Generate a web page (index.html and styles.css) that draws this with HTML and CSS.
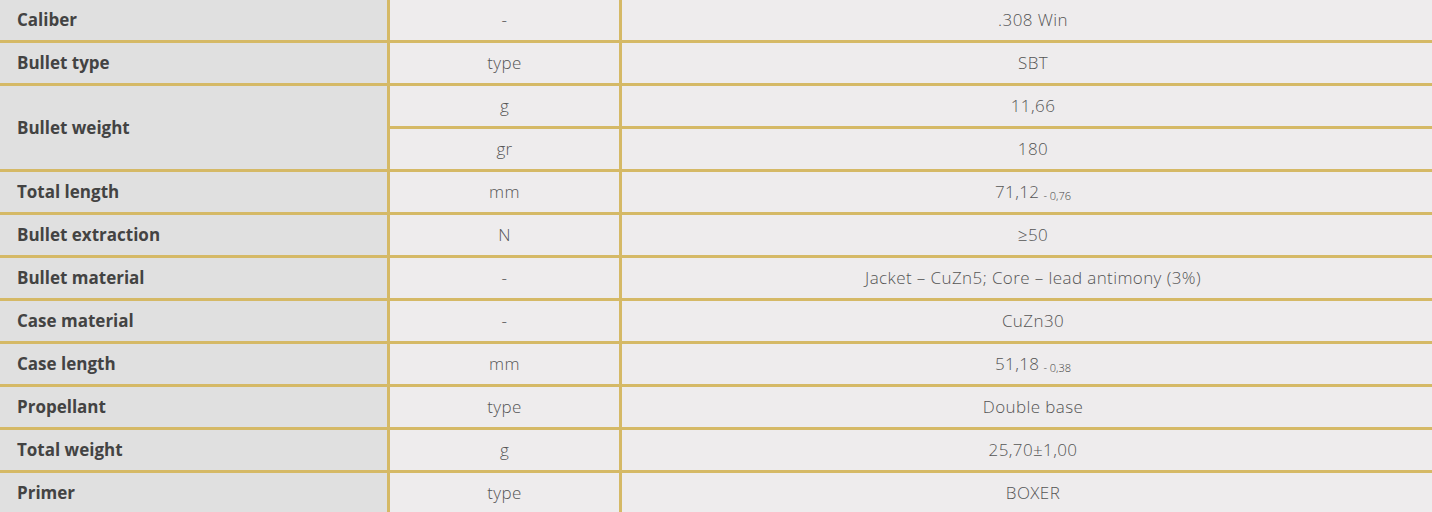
FILE: index.html
```html
<!DOCTYPE html>
<html>
<head>
<meta charset="utf-8">
<link rel="stylesheet" href="styles.css">
</head>
<body>
<div class="spec">
  <div class="lbl">Caliber</div><div class="unit">-</div><div class="val">.308 Win</div>
  <div class="lbl">Bullet type</div><div class="unit">type</div><div class="val">SBT</div>
  <div class="lbl span2">Bullet weight</div><div class="unit">g</div><div class="val">11,66</div>
  <div class="unit">gr</div><div class="val">180</div>
  <div class="lbl">Total length</div><div class="unit">mm</div><div class="val">71,12<span class="tol">- 0,76</span></div>
  <div class="lbl">Bullet extraction</div><div class="unit">N</div><div class="val">≥50</div>
  <div class="lbl">Bullet material</div><div class="unit">-</div><div class="val">Jacket – CuZn5; Core – lead antimony (3%)</div>
  <div class="lbl">Case material</div><div class="unit">-</div><div class="val">CuZn30</div>
  <div class="lbl">Case length</div><div class="unit">mm</div><div class="val">51,18<span class="tol">- 0,38</span></div>
  <div class="lbl">Propellant</div><div class="unit">type</div><div class="val">Double base</div>
  <div class="lbl">Total weight</div><div class="unit">g</div><div class="val">25,70±1,00</div>
  <div class="lbl">Primer</div><div class="unit">type</div><div class="val">BOXER</div>
</div>
</body>
</html>
```
FILE: styles.css
```css
html, body {
  margin: 0;
  padding: 0;
  background: #eeeced;
  overflow: hidden;
}
.spec {
  display: grid;
  width: 1444px;
  grid-template-columns: 387px 229px 1fr;
  grid-auto-rows: 40px;
  gap: 3px;
  background: #d5b966;
  font-family: "Open Sans", sans-serif;
  font-size: 17px;
}
.lbl {
  background: #e0e0e0;
  color: #434343;
  font-weight: 700;
  display: flex;
  align-items: center;
  padding-left: 17px;
  padding-bottom: 1px;
}
.span2 {
  grid-row: span 2;
}
.unit, .val {
  background: #eeeced;
  color: #555555;
  font-weight: 300;
  letter-spacing: 0.4px;
  display: flex;
  align-items: center;
  justify-content: center;
  padding-bottom: 1px;
}
.tol {
  font-size: 11px;
  font-weight: 300;
  letter-spacing: 0;
  color: #444444;
  margin-left: 4px;
  position: relative;
  top: 4px;
}
```
